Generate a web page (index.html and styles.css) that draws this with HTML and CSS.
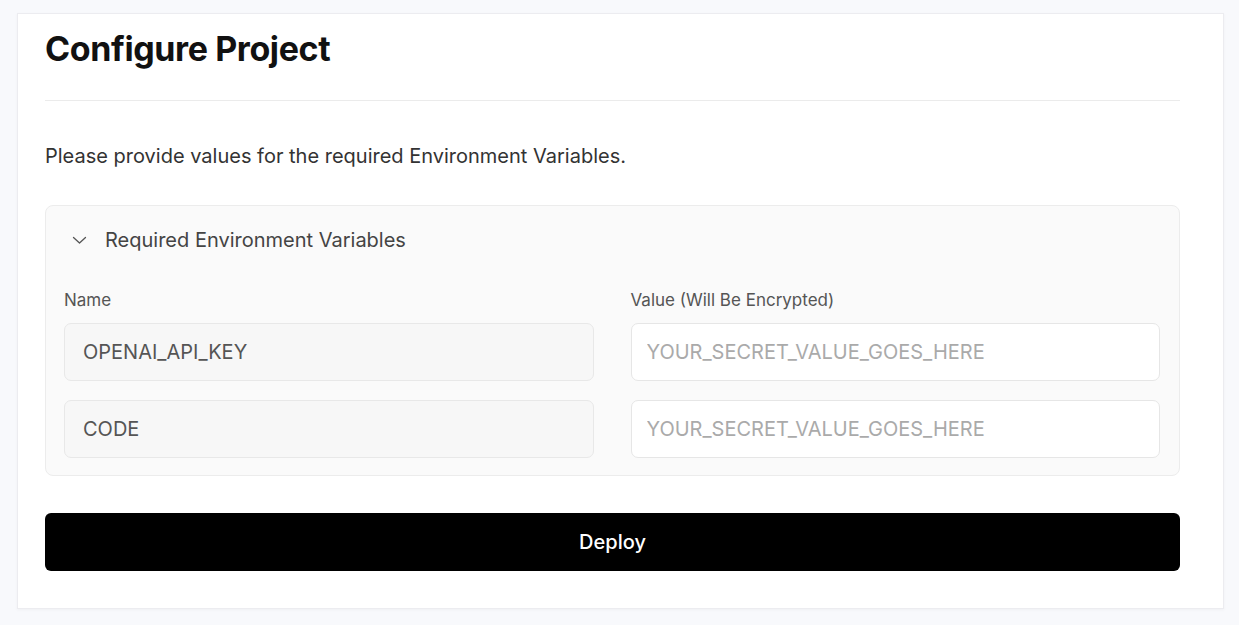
FILE: index.html
```html
<!DOCTYPE html>
<html lang="en">
<head>
<meta charset="utf-8">
<title>Configure Project</title>
<link rel="stylesheet" href="styles.css">
</head>
<body>
<main class="page">
  <section class="card">
    <h1 class="title">Configure Project</h1>
    <hr class="divider">
    <p class="intro">Please provide values for the required Environment Variables.</p>
    <div class="env-box">
      <div class="env-header">
        <svg class="chevron" width="15" height="15" viewBox="0 0 15 15" aria-hidden="true"><path d="M1.5 4.5 L7.5 10 L13.5 4.5" fill="none" stroke="#555" stroke-width="1.3" stroke-linecap="round" stroke-linejoin="round"/></svg>
        <span>Required Environment Variables</span>
      </div>
      <div class="env-grid">
        <div class="col">
          <label class="label">Name</label>
          <div class="field field-name">OPENAI_API_KEY</div>
          <div class="field field-name">CODE</div>
        </div>
        <div class="col">
          <label class="label">Value (Will Be Encrypted)</label>
          <input class="field field-value" type="text" placeholder="YOUR_SECRET_VALUE_GOES_HERE">
          <input class="field field-value" type="text" placeholder="YOUR_SECRET_VALUE_GOES_HERE">
        </div>
      </div>
    </div>
    <button class="deploy" type="button">Deploy</button>
  </section>
</main>
</body>
</html>
```
FILE: styles.css
```css
* { box-sizing: border-box; }
html, body { margin: 0; padding: 0; }
body {
  background: #f8f9fc;
  font-family: Inter, "Noto Sans", "Liberation Sans", sans-serif;
  color: #111;
}
.page {
  padding: 13px 15px 17px 17px;
}
.card {
  background: #fff;
  border: 1px solid #ececf0;
  box-shadow: 0 1px 3px rgba(0,0,0,0.04);
  padding: 13px 43px 37px 27px;
  width: 1207px;
}
.title {
  margin: 0;
  font-size: 34px;
  line-height: 44px;
  font-weight: 700;
  letter-spacing: -0.4px;
  color: #111;
}
.divider {
  border: 0;
  border-top: 1px solid #ebebeb;
  margin: 29px 0 0;
}
.intro {
  margin: 41px 0 0;
  font-size: 20px;
  line-height: 28px;
  color: #333;
}
.env-box {
  margin-top: 35px;
  background: #fafafa;
  border: 1px solid #ececec;
  border-radius: 8px;
  padding: 20px 19px 17px 18px;
}
.env-header {
  display: flex;
  align-items: center;
  gap: 18px;
  padding-left: 8px;
  font-size: 20px;
  line-height: 28px;
  color: #444;
}
.chevron { flex: none; }
.env-grid {
  margin-top: 36px;
  display: grid;
  grid-template-columns: 1fr 1fr;
  column-gap: 37px;
}
.col {
  display: flex;
  flex-direction: column;
  gap: 19px;
}
.label {
  font-size: 17px;
  line-height: 21px;
  color: #555;
  margin-bottom: -7px;
}
.field {
  height: 58px;
  border-radius: 7px;
  font-family: inherit;
  font-size: 20px;
  padding: 0 18px;
  display: flex;
  align-items: center;
  width: 100%;
}
.field-name {
  background: #f7f7f7;
  border: 1px solid #e8e8e8;
  color: #555;
}
.field-value {
  background: #fff;
  border: 1px solid #e6e6e6;
  color: #222;
  outline: none;
  padding-left: 15px;
}
.field-value::placeholder { color: #aaa; }
.deploy {
  display: block;
  width: 100%;
  margin-top: 37px;
  height: 58px;
  background: #000;
  color: #fff;
  border: 0;
  border-radius: 6px;
  font-family: inherit;
  font-size: 20px;
  font-weight: 500;
  cursor: pointer;
}
```
